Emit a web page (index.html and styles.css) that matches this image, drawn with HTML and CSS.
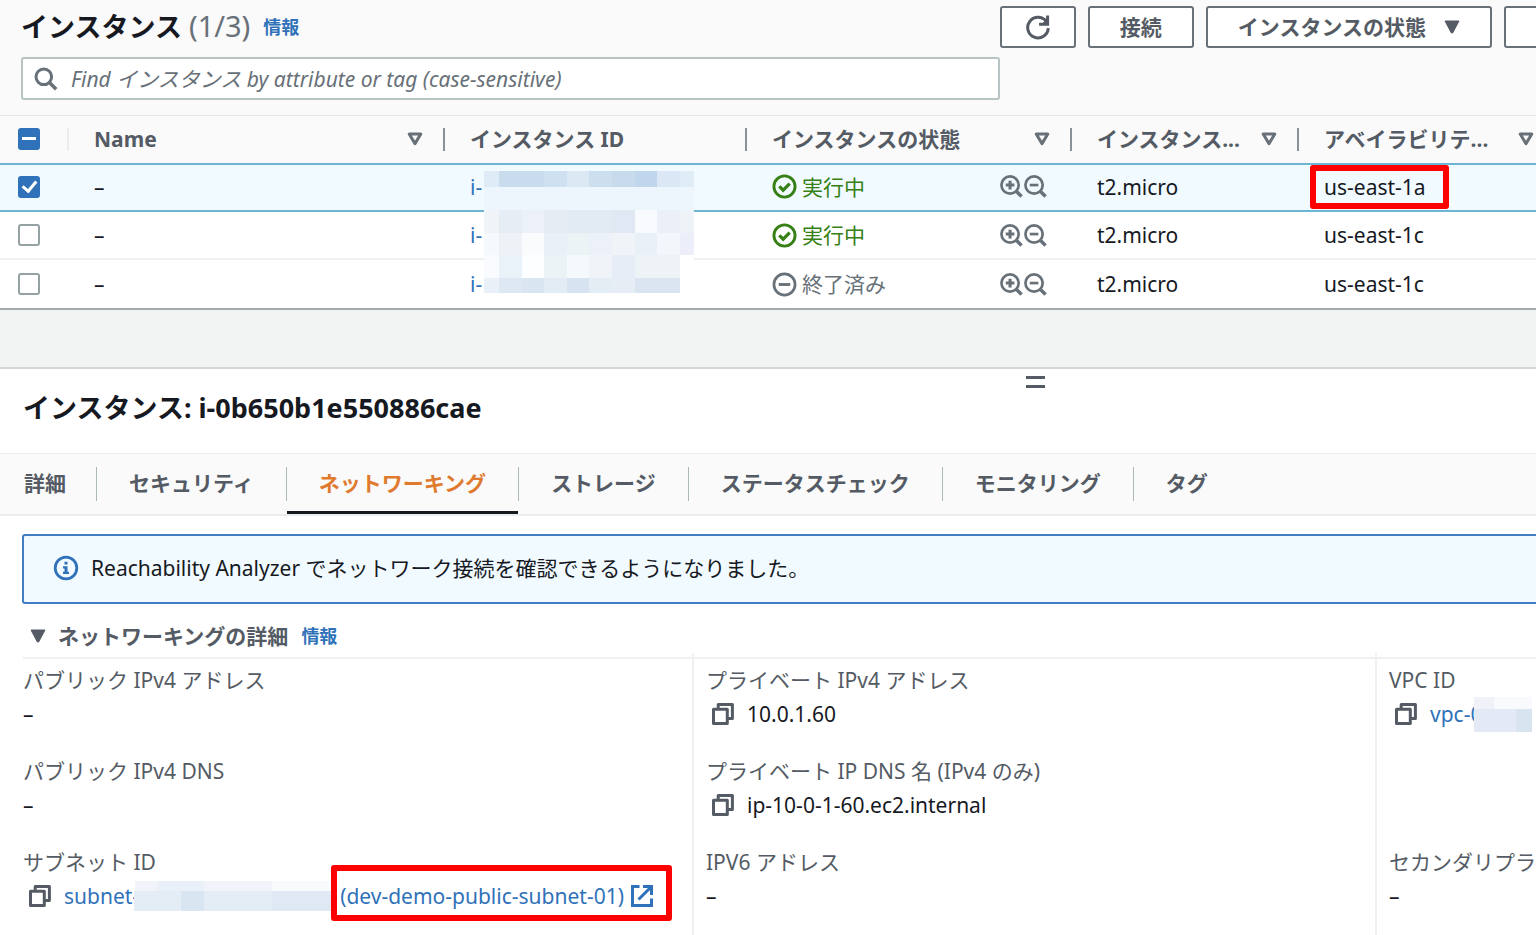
FILE: index.html
```html
<!DOCTYPE html>
<html lang="ja">
<head>
<meta charset="utf-8">
<title>インスタンス</title>
<link rel="stylesheet" href="styles.css">
</head>
<body>
<svg class="defs" aria-hidden="true">
  <symbol id="sort" viewBox="0 0 16 14"><path d="M2.200 2h11.600L8 11.600z" fill="none" stroke="currentColor" stroke-width="3" stroke-linejoin="round"/></symbol>
  <symbol id="caret" viewBox="0 0 16 14"><path d="M1 1h14L8.600 13H7.400z" fill="currentColor" stroke="currentColor" stroke-linejoin="round"/></symbol>
  <symbol id="ok" viewBox="0 0 26 26"><circle cx="13" cy="13" r="11" fill="none" stroke="currentColor" stroke-width="3"/><path d="M7.600 12.800l4 4 6.800-6.800" fill="none" stroke="currentColor" stroke-width="3.400"/></symbol>
  <symbol id="stopped" viewBox="0 0 26 26"><circle cx="13" cy="13" r="11" fill="none" stroke="currentColor" stroke-width="2.800"/><path d="M7 13h12" stroke="currentColor" stroke-width="3"/></symbol>
  <symbol id="zoom-in" viewBox="0 0 24 24"><circle cx="10.500" cy="10.500" r="9" fill="none" stroke="currentColor" stroke-width="2.800"/><path d="M16.500 16.500l6 6" stroke="currentColor" stroke-width="3.600"/><path d="M6 10.500h9M10.500 6v9" stroke="currentColor" stroke-width="3.200"/></symbol>
  <symbol id="zoom-out" viewBox="0 0 24 24"><circle cx="10.500" cy="10.500" r="9" fill="none" stroke="currentColor" stroke-width="2.800"/><path d="M16.500 16.500l6 6" stroke="currentColor" stroke-width="3.600"/><path d="M6 10.500h9" stroke="currentColor" stroke-width="2.800"/></symbol>
  <symbol id="copy" viewBox="0 0 22 22"><path d="M1.500 6.200h13.800v14.200H1.500z M6.200 6V1.600h14.200v14H15.400" fill="none" stroke="currentColor" stroke-width="3" stroke-linejoin="round"/></symbol>
</svg>

<section class="instances">
  <header class="toolbar">
    <div class="title-row">
      <h1>インスタンス <span class="count">(1/3)</span></h1>
      <a class="info" href="#info">情報</a>
      <div class="actions">
        <button class="btn btn-refresh" type="button" aria-label="更新"><svg width="26" height="26" viewBox="0 0 26 26"><path d="M21.800 8.200A10.300 10.300 0 1 0 23.300 14.200" fill="none" stroke="currentColor" stroke-width="3"/><path d="M22.600 1.500v8.700h-8.500" fill="none" stroke="currentColor" stroke-width="3"/><path d="M22.500 3.500v6.500H17z" fill="currentColor"/></svg></button>
        <button class="btn" type="button">接続</button>
        <button class="btn" type="button">インスタンスの状態 <svg class="caret"><use href="#caret"/></svg></button>
        <button class="btn btn-more" type="button" aria-label="アクション"></button>
      </div>
    </div>
    <label class="search">
      <svg width="24" height="24" viewBox="0 0 24 24"><circle cx="9.800" cy="9.800" r="7.800" fill="none" stroke="currentColor" stroke-width="3"/><path d="M15.200 15.200l7 7" stroke="currentColor" stroke-width="3.500"/></svg>
      <input type="text" aria-label="検索" placeholder="Find インスタンス by attribute or tag (case-sensitive)">
    </label>
  </header>

  <table>
    <colgroup><col class="c-check"><col class="c-name"><col class="c-id"><col class="c-state"><col class="c-type"><col></colgroup>
    <thead>
      <tr>
        <th class="check"><div class="cell light"><input type="checkbox" class="some" aria-label="すべて選択"></div></th>
        <th><div class="cell">Name <svg class="sort"><use href="#sort"/></svg></div></th>
        <th><div class="cell">インスタンス ID</div></th>
        <th><div class="cell">インスタンスの状態 <svg class="sort"><use href="#sort"/></svg></div></th>
        <th><div class="cell">インスタンス... <svg class="sort"><use href="#sort"/></svg></div></th>
        <th><div class="cell">アベイラビリテ... <svg class="sort"><use href="#sort"/></svg></div></th>
      </tr>
    </thead>
    <tbody>
      <tr class="selected">
        <td class="check"><input type="checkbox" checked aria-label="行 1"></td>
        <td>–</td>
        <td class="masked"><a href="#i1">i-</a>
          <svg class="mosaic" width="210" height="122" viewBox="0 0 210 122" shape-rendering="crispEdges" aria-hidden="true">
            <path fill="#dfebf7" d="M0 0h15v16H0z"/><path fill="#c9dced" d="M15 0h45v16H15z"/><path fill="#cfe0f0" d="M60 0h23v16H60z"/><path fill="#dce9f4" d="M83 0h22v16H83z"/><path fill="#cddeef" d="M105 0h23v16h-23z"/><path fill="#c8dbec" d="M128 0h23v16h-23z"/><path fill="#bfd6ec" d="M151 0h22v16h-22z"/><path fill="#dbe7f4" d="M173 0h23v16h-23z"/><path fill="#e0edf7" d="M196 0h14v16h-14z"/>
            <path fill="#edf6fd" d="M0 16h210v23H0z"/>
            <path fill="#f0f3f8" d="M0 39h15v23H0z"/><path fill="#e7edf5" d="M15 39h23v23H15z"/><path fill="#ecf0f8" d="M38 39h22v23H38z"/><path fill="#e5ecf4" d="M60 39h23v23H60z"/><path fill="#e2eaf4" d="M83 39h45v23H83z"/><path fill="#dfe8f3" d="M128 39h23v23h-23z"/><path fill="#f8fafd" d="M151 39h22v23h-22z"/><path fill="#eaeff8" d="M173 39h23v23h-23z"/><path fill="#edf3f7" d="M196 39h14v23h-14z"/>
            <path fill="#f4f9fb" d="M0 62h15v22H0z"/><path fill="#eef2f7" d="M15 62h23v22H15z"/><path fill="#fafbfc" d="M38 62h22v22H38z"/><path fill="#e9f0f8" d="M60 62h23v22H60z"/><path fill="#ecf3f5" d="M83 62h22v22H83z"/><path fill="#ebf0f9" d="M105 62h23v22h-23z"/><path fill="#f0f3f8" d="M128 62h23v22h-23z"/><path fill="#e9f0f8" d="M151 62h22v22h-22z"/><path fill="#f3f6fb" d="M173 62h23v22h-23z"/><path fill="#eceffa" d="M196 62h14v22h-14z"/>
            <path fill="#fafbfe" d="M0 84h15v23H0z"/><path fill="#e9f1f9" d="M15 84h23v23H15z"/><path fill="#fdfeff" d="M38 84h22v23H38z"/><path fill="#ecf3f6" d="M60 84h23v23H60z"/><path fill="#f4f9fb" d="M83 84h22v23H83z"/><path fill="#f0f4f9" d="M105 84h23v23h-23z"/><path fill="#e6edf6" d="M128 84h23v23h-23z"/><path fill="#eef3f8" d="M151 84h45v23h-45z"/><path fill="#fff" d="M196 84h14v38h-14z"/>
            <path fill="#e9f0f8" d="M0 107h15v15H0z"/><path fill="#dde8f2" d="M15 107h23v15H15z"/><path fill="#d9e5f1" d="M38 107h22v15H38z"/><path fill="#e3ebf4" d="M60 107h23v15H60z"/><path fill="#d7e3f0" d="M83 107h22v15H83z"/><path fill="#e4ecf4" d="M105 107h23v15h-23z"/><path fill="#e6edf5" d="M128 107h23v15h-23z"/><path fill="#dae5f1" d="M151 107h45v15h-45z"/>
          </svg></td>
        <td><div class="state running"><svg class="status"><use href="#ok"/></svg>実行中<span class="zooms"><svg><use href="#zoom-in"/></svg><svg><use href="#zoom-out"/></svg></span></div></td>
        <td>t2.micro</td>
        <td><span class="marked mark-zone">us-east-1a</span></td>
      </tr>
      <tr>
        <td class="check"><input type="checkbox" aria-label="行 2"></td>
        <td>–</td>
        <td><a href="#i2">i-</a></td>
        <td><div class="state running"><svg class="status"><use href="#ok"/></svg>実行中<span class="zooms"><svg><use href="#zoom-in"/></svg><svg><use href="#zoom-out"/></svg></span></div></td>
        <td>t2.micro</td>
        <td>us-east-1c</td>
      </tr>
      <tr>
        <td class="check"><input type="checkbox" aria-label="行 3"></td>
        <td>–</td>
        <td><a href="#i3">i-</a></td>
        <td><div class="state"><svg class="status"><use href="#stopped"/></svg>終了済み<span class="zooms"><svg><use href="#zoom-in"/></svg><svg><use href="#zoom-out"/></svg></span></div></td>
        <td>t2.micro</td>
        <td>us-east-1c</td>
      </tr>
    </tbody>
  </table>
</section>

<section class="panel">
  <div class="grip" aria-hidden="true"></div>
  <h2>インスタンス: i-0b650b1e550886cae</h2>
  <nav class="tabs">
    <button type="button">詳細</button>
    <button type="button">セキュリティ</button>
    <button type="button" class="active">ネットワーキング</button>
    <button type="button">ストレージ</button>
    <button type="button">ステータスチェック</button>
    <button type="button">モニタリング</button>
    <button type="button">タグ</button>
  </nav>
  <div class="notice">
    <svg width="26" height="26" viewBox="0 0 26 26"><circle cx="13" cy="13" r="10.800" fill="none" stroke="currentColor" stroke-width="2.800"/><path d="M11.500 6.800h3v2.800h-3zM10 11.200h4.500v5.600H16v2.200h-6v-2.200h1.500v-3.400H10z" fill="currentColor"/></svg>
    <span>Reachability Analyzer でネットワーク接続を確認できるようになりました。</span>
  </div>
  <div class="section-head">
    <svg class="caret"><use href="#caret"/></svg>
    <h3>ネットワーキングの詳細</h3>
    <a class="info" href="#net-info">情報</a>
  </div>
  <div class="details">
    <dl>
      <div><dt>パブリック IPv4 アドレス</dt><dd>–</dd></div>
      <div><dt>パブリック IPv4 DNS</dt><dd>–</dd></div>
      <div><dt>サブネット ID</dt><dd class="copyable"><svg class="copy"><use href="#copy"/></svg><a class="subnet" href="#subnet">subnet-<svg class="hidden-id" width="198" height="30" viewBox="0 0 198 30" shape-rendering="crispEdges" aria-hidden="true"><path fill="#f0f4fa" d="M1 0h197v10H1z"/><path fill="#eaf0f8" d="M24 0h46v10H24z"/><path fill="#f8fafd" d="M138 0h60v10h-60z"/><path fill="#e4ecf5" d="M0 10h198v20H0z"/><path fill="#d9e5f1" d="M47 10h23v20H47z"/><path fill="#dfe8f3" d="M138 10h60v20h-60z"/></svg><span class="marked mark-subnet">(dev-demo-public-subnet-01)<svg width="24" height="24" viewBox="0 0 24 24"><path d="M9.500 2.500H2.500v19h19v-7" fill="none" stroke="currentColor" stroke-width="3"/><path d="M13 2.500h8.500V11M21 3L8.500 15.500" fill="none" stroke="currentColor" stroke-width="3"/></svg></span></a></dd></div>
    </dl>
    <dl>
      <div><dt>プライベート IPv4 アドレス</dt><dd class="copyable"><svg class="copy"><use href="#copy"/></svg>10.0.1.60</dd></div>
      <div><dt>プライベート IP DNS 名 (IPv4 のみ)</dt><dd class="copyable"><svg class="copy"><use href="#copy"/></svg>ip-10-0-1-60.ec2.internal</dd></div>
      <div><dt>IPV6 アドレス</dt><dd>–</dd></div>
    </dl>
    <dl>
      <div><dt>VPC ID</dt><dd class="copyable"><svg class="copy"><use href="#copy"/></svg><a class="vpc" href="#vpc">vpc-0<svg class="vpc-mask" width="58" height="35" viewBox="0 0 58 35" shape-rendering="crispEdges" aria-hidden="true"><path fill="#f8fafd" d="M0 0h58v12H0z"/><path fill="#eff3f9" d="M0 0h20v12H0z"/><path fill="#e3eaf5" d="M0 12h58v23H0z"/><path fill="#d9e4f1" d="M42 12h16v23H42z"/></svg></a></dd></div>
      <div class="last"><dt>セカンダリプラ</dt><dd>–</dd></div>
    </dl>
  </div>
</section>
</body>
</html>
```

FILE: styles.css
```css
* { box-sizing: border-box; }

body {
  margin: 0;
  min-height: 100vh;
  overflow: hidden;
  background: #f2f3f3;
  color: #16191f;
  font: 21px/30px "Noto Sans", "Noto Sans CJK JP", sans-serif;
  white-space: nowrap;
}

h1, h2, h3, dl, dt, dd { margin: 0; }
h1, h2 { font-size: 27px; line-height: 40px; }
h3 { font-size: 21px; color: #545b64; }
a { color: #3072b9; text-decoration: none; }
svg { flex: none; }
button, input { font: inherit; color: inherit; }
.defs { display: none; }

.toolbar {
  display: flex;
  flex-direction: column;
  gap: 9px;
  padding: 6px 0 15px 21px;
  background: #fafafa;
}
.title-row { display: flex; align-items: center; }
.count { font-size: 29px; line-height: 30px; font-weight: 400; color: #687078; }
.info { margin-left: 13px; font-size: 18px; font-weight: 700; }
.actions {
  display: flex;
  gap: 12px;
  margin-left: auto;
  margin-right: -88px;
  color: #545b64;
}
.btn {
  display: flex;
  align-items: center;
  gap: 18px;
  height: 42px;
  padding: 0 30px;
  border: 2px solid #687078;
  border-radius: 3px;
  background: #fff;
  font-weight: 700;
}
.btn-refresh { padding: 0 23px; }
.btn-more { width: 120px; }
.caret { width: 16px; height: 14px; color: #545b64; }

.search {
  display: flex;
  align-items: center;
  gap: 13px;
  width: 979px;
  height: 43px;
  padding: 0 11px;
  border: 2px solid #b8c3c4;
  border-radius: 3px;
  background: #fff;
  color: #687078;
}
.search input {
  flex: 1;
  padding: 0;
  border: 0;
  outline: 0;
  background: none;
}
.search input::placeholder { color: #687078; font-style: italic; opacity: 1; }

table {
  width: calc(100% + 20px);
  table-layout: fixed;
  border-collapse: separate;
  border-spacing: 0;
  border-bottom: 2px solid #a2aaad;
  background: #fff;
}
.c-check { width: 69px; }
.c-name { width: 376px; }
.c-id { width: 302px; }
.c-state { width: 325px; }
.c-type { width: 227px; }
th {
  height: 48px;
  padding: 0;
  border-top: 1px solid #e4e7e8;
  background: #fafafa;
  color: #545b64;
  text-align: left;
}
.cell {
  display: flex;
  align-items: center;
  justify-content: space-between;
  height: 23px;
  padding: 0 20px 2px 25px;
  border-right: 2px solid #879196;
}
.cell.light { border-color: #eaeded; }
.sort { width: 16px; height: 14px; color: #687078; }
td {
  height: 48px;
  padding: 0 25px;
  border-bottom: 2px solid #eff0f1;
}
th.check .cell, td.check { padding-left: 18px; padding-right: 0; }
.selected td {
  height: 49px;
  padding-bottom: 2px;
  border-top: 2px solid #6cb5d3;
  border-bottom: 2px solid #6cb5d3;
  background: #f1faff;
}
tr:last-child td { border-bottom: 0; }

input[type="checkbox"] {
  display: block;
  appearance: none;
  width: 22px;
  height: 22px;
  margin: 0;
  border: 2px solid #96a1a3;
  border-radius: 3px;
  background: #fff;
}
input[type="checkbox"].some {
  border-color: #3072b9;
  background: linear-gradient(#fff, #fff) center / 14px 3px no-repeat #3072b9;
}
input[type="checkbox"]:checked { border-color: #3072b9; background: #3072b9; }
input[type="checkbox"]:checked::after {
  content: "";
  display: block;
  box-sizing: border-box;
  width: 9px;
  height: 14px;
  margin: 0 0 0 5px;
  border: solid #fff;
  border-width: 0 3px 3px 0;
  transform: rotate(40deg);
}

.masked { position: relative; }
.mosaic { position: absolute; left: 39px; top: 6px; z-index: 1; }
.state { display: flex; align-items: center; gap: 5px; color: #687078; }
.running { color: #368016; }
.status { width: 25px; height: 25px; }
.zooms { display: flex; gap: 1px; margin-left: auto; color: #687078; }
.zooms svg { width: 23px; height: 23px; }

.marked { position: relative; }
.marked::after {
  content: "";
  position: absolute;
  z-index: 2;
  box-sizing: border-box;
  border: 6px solid #fe0000;
  border-radius: 3px;
  pointer-events: none;
}
.mark-zone::after { inset: -8px -23px -8px -14px; }
.mark-subnet::after { inset: -16px -18px -10px -9px; }

.panel {
  margin-top: 57px;
  border-top: 2px solid #d3d7d8;
  background: #fff;
}
.grip {
  width: 19px;
  height: 12px;
  margin: 7px 0 0 calc(67% - 3px);
  border: solid #545b64;
  border-width: 3px 0;
}
.panel h2 { padding: 0 23px; }

.tabs {
  display: flex;
  align-items: stretch;
  height: 63px;
  margin-top: 25px;
  padding-left: 24px;
  border-top: 1px solid #eaeded;
  border-bottom: 2px solid #eaeded;
  background: #fafafa;
}
.tabs button {
  position: relative;
  padding: 0 32px;
  margin-right: 1px;
  border: 0;
  border-bottom: 3px solid transparent;
  background: none;
  color: #545b64;
  font-weight: 700;
}
.tabs button:first-child { padding-left: 0; padding-right: 30px; }
.tabs button:not(:last-child)::after {
  content: "";
  position: absolute;
  right: -1px;
  top: 13px;
  width: 1px;
  height: 34px;
  background: #aab7b8;
}
.tabs .active { border-color: #16191f; color: #e07a2f; }

.notice {
  display: flex;
  align-items: center;
  gap: 12px;
  height: 70px;
  margin: 18px -4px 0 22px;
  padding: 0 0 2px 29px;
  border: 2px solid #3f7fc1;
  border-radius: 3px;
  background: #f1faff;
}
.notice svg { color: #3072b9; }

.section-head {
  display: flex;
  align-items: center;
  height: 55px;
  margin-left: 23px;
  padding: 10px 0 0 7px;
  border-bottom: 2px solid #eff0f1;
}
.section-head h3 { margin-left: 12px; }

.details {
  display: grid;
  grid-template-columns: repeat(3, 1fr);
  width: calc(100% + 513px);
  margin: -6px 0 0 9px;
}
dl {
  display: grid;
  grid-template-rows: repeat(3, 68px);
  gap: 23px;
  padding: 12px 0 24px 14px;
}
dl + dl { padding-left: 12px; border-left: 2px solid #eff0f1; }
dt { color: #545b64; }
dd { display: flex; align-items: center; height: 38px; }
.last { grid-row: 3; }
.copyable { gap: 13px; padding-left: 6px; }
.copy { width: 22px; height: 22px; color: #545b64; }
.subnet, .vpc, .mark-subnet { display: flex; align-items: center; }
.hidden-id { margin: 0 8px 0 -5px; }
.mark-subnet { gap: 6px; }
.vpc-mask { margin-left: -8px; }
```
